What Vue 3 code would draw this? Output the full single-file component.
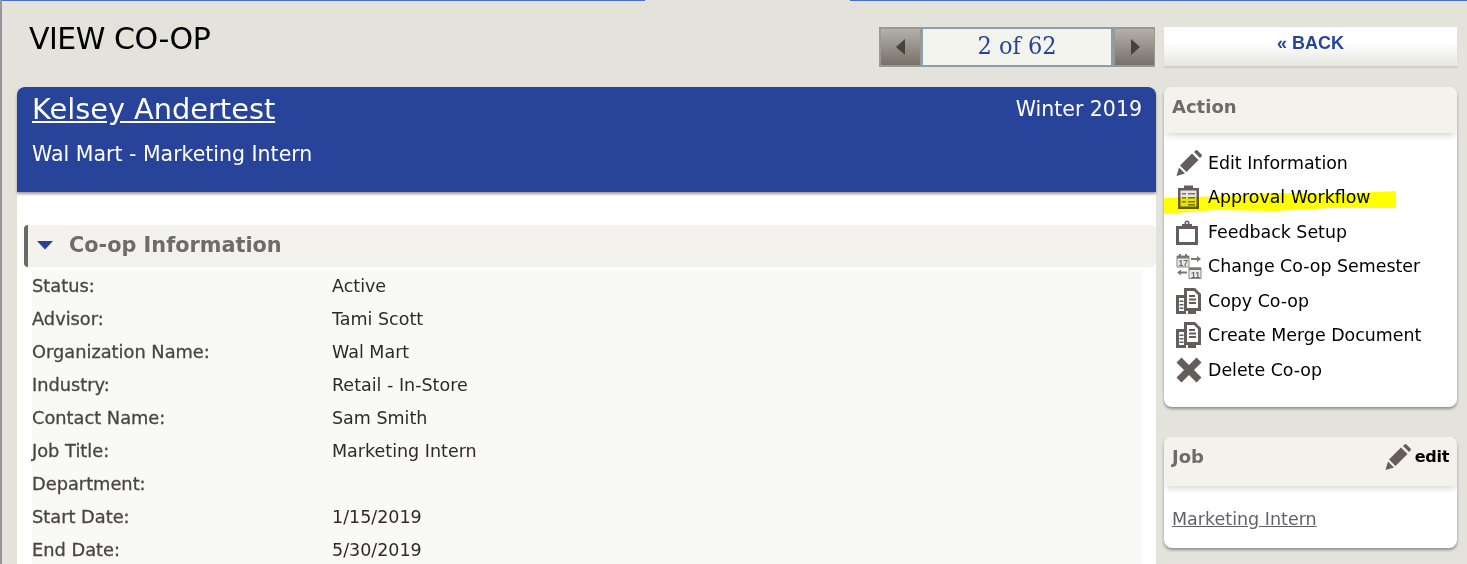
<script setup>
const fields = [
  { label: 'Status:', value: 'Active' },
  { label: 'Advisor:', value: 'Tami Scott' },
  { label: 'Organization Name:', value: 'Wal Mart' },
  { label: 'Industry:', value: 'Retail - In-Store' },
  { label: 'Contact Name:', value: 'Sam Smith' },
  { label: 'Job Title:', value: 'Marketing Intern' },
  { label: 'Department:', value: '' },
  { label: 'Start Date:', value: '1/15/2019' },
  { label: 'End Date:', value: '5/30/2019' },
]

const actions = [
  { label: 'Edit Information', icon: 'pencil' },
  { label: 'Approval Workflow', icon: 'list' },
  { label: 'Feedback Setup', icon: 'clip' },
  { label: 'Change Co-op Semester', icon: 'cal' },
  { label: 'Copy Co-op', icon: 'copy' },
  { label: 'Create Merge Document', icon: 'copy' },
  { label: 'Delete Co-op', icon: 'x' },
]
</script>

<template>
  <div class="page">
    <div class="topline"><span class="topline__gap"></span></div>
    <div class="layout">
      <div class="head">
        <h1 class="title">VIEW CO-OP</h1>
        <div class="pager">
          <button class="pager__btn">
            <svg width="12" height="18" viewBox="0 0 12 18"><path d="M10 1v16L1 9z" fill="#45433e" /></svg>
          </button>
          <div class="pager__count">2 of 62</div>
          <button class="pager__btn">
            <svg width="12" height="18" viewBox="0 0 12 18"><path d="M2 1v16l9-8z" fill="#45433e" /></svg>
          </button>
        </div>
      </div>
      <a class="back">« BACK</a>

      <main class="card">
        <header class="banner">
          <div class="banner__top">
            <a class="banner__name">Kelsey Andertest</a>
            <span class="banner__term">Winter 2019</span>
          </div>
          <div class="banner__sub">Wal Mart - Marketing Intern</div>
        </header>
        <section class="info">
          <h2 class="info__head">
            <svg width="18" height="10" viewBox="0 0 18 10"><path d="M1 1h16l-8 8.500z" fill="#27449a" /></svg>
            Co-op Information
          </h2>
          <div class="info__rows">
            <div v-for="f in fields" :key="f.label" class="row">
              <span class="row__label">{{ f.label }}</span>
              <span>{{ f.value }}</span>
            </div>
          </div>
        </section>
      </main>

      <aside class="side">
        <div class="panel panel--action">
          <div class="panel__head">Action</div>
          <ul class="actions">
            <li v-for="a in actions" :key="a.label" class="action">
              <svg class="action__icon" width="26" height="26" viewBox="0 0 26 26">
                <g v-if="a.icon === 'pencil'" fill="#655c5c">
                  <path d="M0.500 26l2.500-8.500 6 6z" />
                  <path d="M4 15.500L16 3.500l6.500 6.500-12 12z" />
                  <path d="M18 2l1.500-1.500a1.500 1.500 0 0 1 2 0l4 4a1.500 1.500 0 0 1 0 2L24 8z" />
                </g>
                <g v-else-if="a.icon === 'list'">
                  <path d="M2 4h21v21H2z" fill="#655c5c" />
                  <path d="M4.500 6.500h16v16h-16z" fill="#e8e4e0" />
                  <path d="M8 1.500h9V6H8z" fill="#655c5c" />
                  <path d="M6 9h4v1.500H6zM12 9h7v1.500h-7zM6 13h4v1.500H6zM12 13h7v1.500h-7zM6 17h4v1.500H6zM12 17h7v1.500h-7zM12 20h7v1.500h-7z" fill="#7a7272" />
                </g>
                <g v-else-if="a.icon === 'clip'">
                  <path d="M0 7h22v19H0zM3 10v13h16V10z" fill="#655c5c" fill-rule="evenodd" />
                  <path d="M6 5h10v5H6z" fill="#655c5c" />
                  <path d="M8.500 4a2.500 2.500 0 0 1 5 0v1h-5z" fill="#655c5c" />
                  <circle cx="11" cy="4" r="1" fill="#fff" />
                </g>
                <g v-else-if="a.icon === 'cal'">
                  <path d="M1 3h12v11H1z" fill="#ecebe9" stroke="#8b8585" />
                  <path d="M1 3h12v2.500H1zM3 1h2v3H3zM9 1h2v3H9z" fill="#7d7676" />
                  <text x="2.500" y="13" class="cal-num">17</text>
                  <path d="M13 15h12v10.500H13z" fill="#ecebe9" stroke="#8b8585" />
                  <path d="M13 14.500h12V17H13z" fill="#7d7676" />
                  <text x="15" y="25" class="cal-num">11</text>
                  <path d="M15 5h6V3l4 3-4 3V7h-6zM1 19.500l4-3v2h6v2H5v2z" fill="#7d7676" />
                </g>
                <g v-else-if="a.icon === 'copy'">
                  <path d="M0 7h12v19h8v-4H8V7z" fill="#655c5c" />
                  <path d="M0 7h10v19H0z" fill="#655c5c" />
                  <path d="M3 10h5v13H3z" fill="#fff" />
                  <path d="M3.500 12.500h4V14h-4zM3.500 16h4v1.500h-4zM3.500 19.500h4V21h-4z" fill="#655c5c" />
                  <path d="M8 0h11l6 6v17H8z" fill="#655c5c" />
                  <path d="M11 3h7l4 4v13H11z" fill="#fff" />
                  <path d="M13 7h6v2h-6zM13 10.500h7v2h-7zM13 14h7v2h-7z" fill="#655c5c" />
                </g>
                <path v-else d="M5.500 0.500L13 8l7.500-7.500 5 5L18 13l7.500 7.500-5 5L13 18l-7.500 7.500-5-5L8 13 0.500 5.500z" fill="#655c5c" />
              </svg>
              <span>{{ a.label }}</span>
            </li>
          </ul>
        </div>

        <div class="panel panel--job">
          <div class="panel__head panel__head--split">
            <span>Job</span>
            <span class="panel__edit">
              <svg width="26" height="26" viewBox="0 0 26 26" fill="#655c5c">
                <path d="M0.500 26l2.500-8.500 6 6z" />
                <path d="M4 15.500L16 3.500l6.500 6.500-12 12z" />
                <path d="M18 2l1.500-1.500a1.500 1.500 0 0 1 2 0l4 4a1.500 1.500 0 0 1 0 2L24 8z" />
              </svg>
              edit
            </span>
          </div>
          <a class="panel__link">Marketing Intern</a>
        </div>
      </aside>
    </div>

    <svg class="marker" width="232" height="24" viewBox="0 0 232 24">
      <path d="M0 7l60-2 60-3 50 1 62-3v17l-65 0-55 3-60-1-52 4z" fill="#ffff00" />
    </svg>
  </div>
</template>

<style>
html,
body {
  margin: 0;
  overflow: hidden;
}
</style>

<style scoped>
.page {
  position: relative;
  height: 564px;
  overflow: hidden;
  background: #e3e3dc;
  border-left: 2px solid #97959a;
  box-sizing: border-box;
  font-family: "DejaVu Sans", sans-serif;
  color: #000;
}
.topline {
  height: 1px;
  background: #4a6ec3;
  margin-left: -2px;
}
.topline__gap {
  display: block;
  width: 205px;
  height: 1px;
  margin-left: 645px;
  background: #e3e3dc;
}
.layout {
  display: grid;
  grid-template-columns: 1139px 293px;
  grid-template-rows: 60px 1fr;
  column-gap: 8px;
  padding: 26px 0 0 15px;
}
.head {
  display: flex;
  justify-content: space-between;
  align-items: flex-start;
}
.title {
  margin: 0 0 0 12px;
  font-size: 30px;
  line-height: 24px;
  font-weight: 400;
  letter-spacing: -0.5px;
}
.pager {
  display: flex;
  height: 40px;
  margin-right: 1px;
  width: 276px;
}
.pager__btn {
  width: 42px;
  padding: 0;
  border: 2px solid #9a9893;
  border-right-width: 1px;
  background: linear-gradient(#b5b0aa, #75726a);
  display: flex;
  align-items: center;
  justify-content: center;
}
.pager__count {
  flex: 1;
  background: #f4f4ee;
  border: 2px solid #8a9fae;
  color: #27449a;
  text-align: center;
  line-height: 33px;
  font-family: "DejaVu Serif Condensed", "Liberation Serif", serif;
  font-size: 25px;
}
.back {
  display: block;
  height: 39px;
  margin-bottom: 21px;
  background: linear-gradient(#fff 40%, #e6e6df);
  box-shadow: 0 2px 1px #cfcfc7;
  color: #27449a;
  font-family: "Liberation Sans", sans-serif;
  font-weight: 700;
  font-size: 18px;
  line-height: 33px;
  text-align: center;
  box-sizing: border-box;
}
.card {
  background: #fff;
  border-radius: 8px 8px 0 0;
  height: 500px;
}
.banner {
  height: 105px;
  box-sizing: border-box;
  padding: 4px 14px 0 15px;
  background: #27449a;
  color: #fff;
  border-radius: 8px 8px 0 0;
  box-shadow: 0 2px 3px #9a9a9a;
}
.banner__top {
  display: flex;
  justify-content: space-between;
}
.banner__name {
  font-size: 28.800px;
  line-height: 36px;
  text-decoration: underline;
}
.banner__term {
  font-size: 20.500px;
  line-height: 36px;
}
.banner__sub {
  margin-top: 13px;
  font-size: 20.500px;
  line-height: 28px;
}
.info {
  padding: 33px 0 0 7px;
}
.info__head {
  display: flex;
  align-items: center;
  gap: 15px;
  height: 42px;
  margin: 0;
  padding: 0 0 2px 8px;
  box-sizing: border-box;
  background: #f4f2ed;
  border-left: 4px solid #6a6868;
  border-radius: 4px 5px 5px 4px;
  font-size: 20.800px;
  font-weight: 700;
  color: #6f6b68;
}
.info__rows {
  margin: 3px 14px 0 8px;
  background: #f9f9f5;
}
.row {
  display: grid;
  grid-template-columns: 300px 1fr;
  height: 33px;
  padding-bottom: 2px;
  box-sizing: border-box;
  align-items: center;
  font-size: 17.500px;
  color: #2f2a2a;
}
.row__label {
  font-size: 17.800px;
  color: #4a4444;
  -webkit-text-stroke: 0.3px #4a4444;
}
.side {
  display: flex;
  flex-direction: column;
  gap: 30px;
}
.panel {
  background: #fff;
  border-radius: 8px;
  box-shadow: 0 2px 3px #8f8f8f;
}
.panel--action {
  height: 320px;
}
.panel--job {
  height: 111px;
}
.panel__head {
  background: #f4f2ed;
  border-radius: 8px 8px 0 0;
  height: 46px;
  line-height: 40px;
  padding: 0 8px;
  font-size: 18px;
  font-weight: 700;
  color: #6f6b68;
  box-shadow: 0 4px 6px -2px #d3d3ce;
}
.panel--job .panel__head {
  height: 49px;
}
.panel__head--split {
  display: flex;
  justify-content: space-between;
}
.panel__edit {
  display: flex;
  align-items: center;
  gap: 4px;
  height: 40px;
  color: #000;
  font-size: 16px;
  letter-spacing: -0.3px;
}
.actions {
  list-style: none;
  margin: 0;
  padding: 12.400px 0 0 12px;
}
.action {
  display: flex;
  align-items: center;
  height: 34.500px;
  gap: 6px;
  font-size: 17.400px;
  color: #000;
}
.action__icon {
  flex: none;
}
.cal-num {
  font-family: "Liberation Sans", sans-serif;
  font-size: 8.500px;
  font-weight: 700;
  fill: #6a6464;
}
.panel__link {
  display: block;
  margin: 23px 0 0 8px;
  font-size: 17.500px;
  color: #655f6a;
  text-decoration: underline;
}
.marker {
  position: absolute;
  left: 1162px;
  top: 191px;
  mix-blend-mode: multiply;
  pointer-events: none;
}
</style>
